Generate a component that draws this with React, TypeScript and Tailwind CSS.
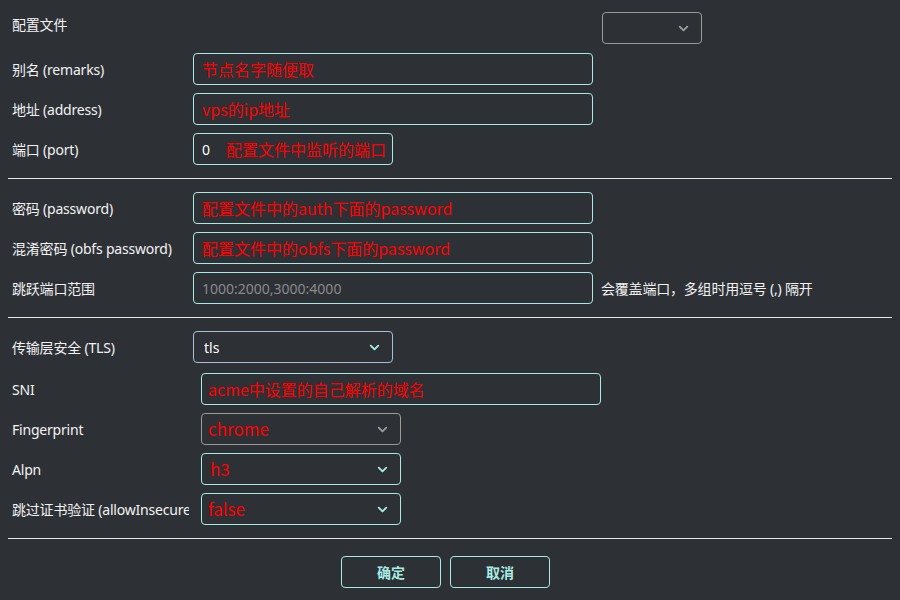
import { ChevronDown } from "lucide-react";
import type { ReactNode } from "react";

const LABEL_FONT = "font-['Noto_Sans','Noto_Sans_CJK_SC',sans-serif]";
const RED_FONT = "font-['Noto_Sans_CJK_SC',sans-serif]";

function Label({ children, wide }: { children: ReactNode; wide?: boolean }) {
  return (
    <div
      className={`shrink-0 overflow-hidden whitespace-nowrap pl-1 pt-px text-[14px] tracking-[-0.2px] text-[#f2f2f2] ${LABEL_FONT} ${
        wide ? "mr-[12px] w-[181px]" : "w-[185px]"
      }`}
    >
      {children}
    </div>
  );
}

function RedInput({ text, width = "w-[400px]" }: { text: string; width?: string }) {
  return (
    <div
      className={`flex h-8 items-center rounded-[4px] border border-[#a7ece4] px-2 text-[16px] text-[#f00] ${RED_FONT} ${width}`}
    >
      {text}
    </div>
  );
}

function Select({
  children,
  border,
  chevron,
  width = "w-[200px]",
}: {
  children?: ReactNode;
  border: string;
  chevron: string;
  width?: string;
}) {
  return (
    <div className={`flex h-8 items-center justify-between rounded-[4px] border pl-1.5 pr-2.5 ${border} ${width}`}>
      <div className="flex items-center">{children}</div>
      <ChevronDown size={15} strokeWidth={3} className={chevron} />
    </div>
  );
}

function Divider() {
  return <div className="my-[13px] h-px bg-[#e8e8e8]" />;
}

export default function App() {
  return (
    <div className="h-[600px] w-[900px] bg-[#2d3136] px-2 pt-3">
      <div className="flex items-start justify-between">
        <div className={`pl-1 pt-[2px] text-[14px] tracking-[-0.2px] text-[#f2f2f2] ${LABEL_FONT}`}>配置文件</div>
        <div className="mr-[190px]">
          <Select border="border-[#9a9a9a]" chevron="text-[#9a9a9a]" width="w-[100px]" />
        </div>
      </div>

      <div className="mt-[9px] flex flex-col gap-2">
        <div className="flex items-center">
          <Label>别名 (remarks)</Label>
          <RedInput text="节点名字随便取" />
        </div>
        <div className="flex items-center">
          <Label>地址 (address)</Label>
          <RedInput text="vps的ip地址" />
        </div>
        <div className="flex items-center">
          <Label>端口 (port)</Label>
          <div className="flex h-8 w-[200px] items-center overflow-hidden whitespace-nowrap rounded-[4px] border border-[#a7ece4] pl-2">
            <span className={`w-6 text-[14px] text-white ${LABEL_FONT}`}>0</span>
            <span className={`text-[16px] text-[#f00] ${RED_FONT}`}>配置文件中监听的端口</span>
          </div>
        </div>
      </div>

      <Divider />

      <div className="flex flex-col gap-2">
        <div className="flex items-center">
          <Label>密码 (password)</Label>
          <RedInput text="配置文件中的auth下面的password" />
        </div>
        <div className="flex items-center">
          <Label>混淆密码 (obfs password)</Label>
          <RedInput text="配置文件中的obfs下面的password" />
        </div>
        <div className="flex items-center">
          <Label>跳跃端口范围</Label>
          <div
            className={`flex h-8 w-[400px] items-center rounded-[4px] border border-[#a7ece4] px-2 text-[14px] text-[#8a8a8a] ${LABEL_FONT}`}
          >
            1000:2000,3000:4000
          </div>
          <div className={`ml-2 whitespace-nowrap text-[14px] tracking-[-0.2px] text-[#f2f2f2] ${LABEL_FONT}`}>
            会覆盖端口，多组时用逗号 (,) 隔开
          </div>
        </div>
      </div>

      <Divider />

      <div className="flex items-center">
        <Label>传输层安全 (TLS)</Label>
        <Select border="border-[#a9bdd6]" chevron="text-[#a7ece4]">
          <span className={`pl-1 text-[14px] text-white ${LABEL_FONT}`}>tls</span>
        </Select>
      </div>
      <div className="mt-[10px] flex flex-col gap-2">
        <div className="flex items-center">
          <Label wide>SNI</Label>
          <div
            className={`flex h-8 w-[400px] items-center rounded-[4px] border border-[#a7ece4] px-1.5 text-[16px] text-[#f00] ${RED_FONT}`}
          >
            acme中设置的自己解析的域名
          </div>
        </div>
        <div className="flex items-center">
          <Label wide>Fingerprint</Label>
          <Select border="border-[#9a9a9a]" chevron="text-[#9a9a9a]">
            <span className={`text-[17px] text-[#f00] ${RED_FONT}`}>chrome</span>
          </Select>
        </div>
        <div className="flex items-center">
          <Label wide>Alpn</Label>
          <Select border="border-[#a7ece4]" chevron="text-[#a7ece4]">
            <span className={`pl-0.5 text-[17px] text-[#f00] ${RED_FONT}`}>h3</span>
          </Select>
        </div>
        <div className="flex items-center">
          <Label wide>跳过证书验证 (allowInsecure)</Label>
          <Select border="border-[#a7ece4]" chevron="text-[#a7ece4]">
            <span className={`text-[17px] text-[#f00] ${RED_FONT}`}>false</span>
          </Select>
        </div>
      </div>

      <div className="mb-[17px] mt-[13px] h-px bg-[#e8e8e8]" />

      <div className="flex justify-center gap-[9px] pr-[9px]">
        <button
          className={`h-8 w-[100px] rounded-[4px] border border-[#a7ece4] text-[14px] font-bold text-[#a7ece4] ${LABEL_FONT}`}
        >
          确定
        </button>
        <button
          className={`h-8 w-[100px] rounded-[4px] border border-[#a7ece4] text-[14px] font-bold text-[#a7ece4] ${LABEL_FONT}`}
        >
          取消
        </button>
      </div>
    </div>
  );
}
